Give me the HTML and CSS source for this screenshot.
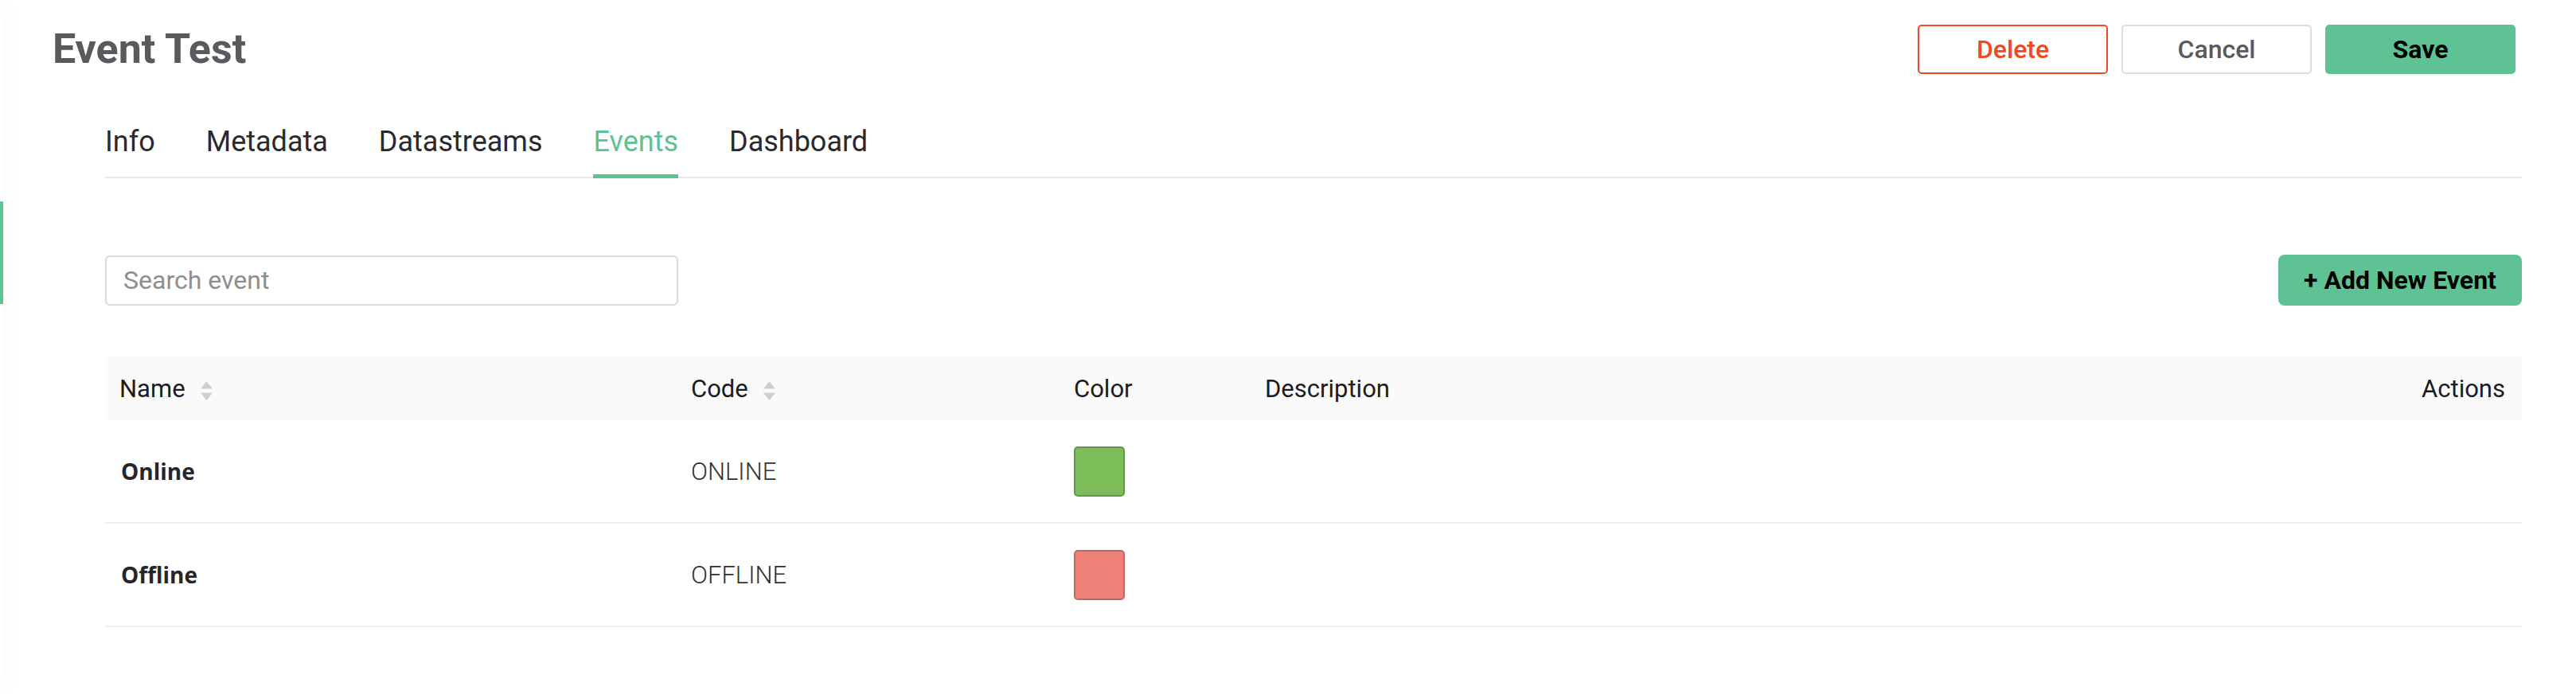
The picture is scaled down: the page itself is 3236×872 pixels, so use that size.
FILE: index.html
```html
<!DOCTYPE html>
<html lang="en">
<head>
<meta charset="utf-8">
<title>Event Test</title>
<link rel="stylesheet" href="styles.css">
</head>
<body>
<div class="app">
  <aside class="rail"><span class="rail-active"></span></aside>
  <main class="main">
    <header class="page-head">
      <h1 class="page-title">Event Test</h1>
      <div class="head-actions">
        <button class="btn btn-danger" type="button">Delete</button>
        <button class="btn btn-default" type="button">Cancel</button>
        <button class="btn btn-primary" type="button">Save</button>
      </div>
    </header>
    <section class="content">
      <nav class="tabs">
        <a class="tab">Info</a>
        <a class="tab">Metadata</a>
        <a class="tab">Datastreams</a>
        <a class="tab tab-active">Events</a>
        <a class="tab">Dashboard</a>
      </nav>
      <div class="toolbar">
        <input class="search" type="text" placeholder="Search event">
        <button class="btn-add" type="button">+ Add New Event</button>
      </div>
      <table class="events">
        <colgroup>
          <col class="col-name">
          <col class="col-code">
          <col class="col-color">
          <col>
          <col class="col-actions">
        </colgroup>
        <thead>
          <tr>
            <th><span class="th-sort">Name<svg class="sort" width="17" height="26" viewBox="0 0 17 26"><path d="M8.5 1 L16 10.5 H1 Z M1 15.5 H16 L8.5 25 Z" fill="#cfcfcf"/></svg></span></th>
            <th><span class="th-sort">Code<svg class="sort" width="17" height="26" viewBox="0 0 17 26"><path d="M8.5 1 L16 10.5 H1 Z M1 15.5 H16 L8.5 25 Z" fill="#cfcfcf"/></svg></span></th>
            <th>Color</th>
            <th>Description</th>
            <th class="th-actions">Actions</th>
          </tr>
        </thead>
        <tbody>
          <tr>
            <td class="cell-name">Online</td>
            <td class="cell-code">ONLINE</td>
            <td><span class="swatch swatch-green"></span></td>
            <td></td>
            <td></td>
          </tr>
          <tr>
            <td class="cell-name">Offline</td>
            <td class="cell-code">OFFLINE</td>
            <td><span class="swatch swatch-red"></span></td>
            <td></td>
            <td></td>
          </tr>
        </tbody>
      </table>
    </section>
  </main>
</div>
</body>
</html>
```
FILE: styles.css
```css
* { box-sizing: border-box; }

html, body {
  margin: 0;
  background: #fff;
}

body {
  font-family: Roboto, "Noto Sans", "Liberation Sans", sans-serif;
  color: #2a2a2e;
}

.app {
  display: flex;
  min-height: 100vh;
}

.rail {
  flex: 0 0 4px;
  background: #fff;
  box-shadow: 0 0 32px rgba(0, 0, 0, 0.09);
  position: relative;
  z-index: 1;
  padding-top: 253px;
}

.rail-active {
  display: block;
  width: 4px;
  height: 129px;
  background: #5ec294;
}

.main {
  flex: 1;
  min-width: 0;
}

/* header */
.page-head {
  display: flex;
  align-items: center;
  justify-content: space-between;
  height: 93px;
  padding: 31px 76px 0 62px;
}

.page-title {
  margin: 0;
  font-size: 52px;
  line-height: 62px;
  font-weight: 700;
  color: #5a5a5e;
}

.head-actions {
  display: flex;
  gap: 17px;
}

.btn {
  width: 239px;
  height: 62px;
  border: 2px solid;
  border-radius: 5px;
  background: #fff;
  font-family: Roboto, sans-serif;
  font-size: 32px;
  font-weight: 500;
  cursor: pointer;
}

.btn-danger {
  border-color: #ef4a22;
  color: #ef4a22;
}

.btn-default {
  border-color: #dcdcdc;
  color: #5a5a5e;
}

.btn-primary {
  border-color: #5ec294;
  background: #5ec294;
  color: #000;
  font-weight: 700;
}

/* content */
.content {
  padding: 0 68px 0 128px;
}

.tabs {
  display: flex;
  gap: 64px;
  margin-top: 64px;
  border-bottom: 2px solid #e8e8e8;
}

.tab {
  position: relative;
  font-size: 36px;
  line-height: 42px;
  padding-bottom: 23px;
  color: #2a2a2e;
  cursor: pointer;
}

.tab-active {
  color: #5ec294;
}

.tab-active::after {
  content: "";
  position: absolute;
  left: 0;
  right: 0;
  bottom: -2px;
  height: 5px;
  background: #5ec294;
}

.toolbar {
  display: flex;
  align-items: center;
  justify-content: space-between;
  margin-top: 96px;
}

.search {
  width: 720px;
  height: 63px;
  border: 2px solid #dadada;
  border-radius: 6px;
  padding: 0 21px;
  font-family: Roboto, sans-serif;
  font-size: 32px;
  color: #333;
  outline: none;
}

.search::placeholder {
  color: #8e8e8e;
}

.btn-add {
  height: 64px;
  width: 306px;
  border: 0;
  border-radius: 8px;
  background: #5ec294;
  color: #000;
  font-family: Roboto, sans-serif;
  font-size: 32px;
  font-weight: 700;
  cursor: pointer;
}

/* table */
.events {
  width: 100%;
  margin-top: 64px;
  border-collapse: separate;
  border-spacing: 0;
  table-layout: fixed;
}

.col-name { width: 718px; }
.col-code { width: 481px; }
.col-color { width: 240px; }
.col-actions { width: 240px; }

.events th {
  height: 80px;
  padding: 0 18px;
  background: #fafafa;
  text-align: left;
  font-size: 31px;
  font-weight: 400;
  color: #1c1c1e;
}

.events th.th-actions {
  text-align: right;
  padding-right: 21px;
}

.th-sort {
  display: inline-flex;
  align-items: center;
  gap: 18px;
}

.sort {
  margin-top: 5px;
}

.events td {
  height: 130px;
  padding: 0 18px;
  border-bottom: 2px solid #ededed;
}

.events td.cell-name {
  padding-left: 20px;
  font-family: "Open Sans", Roboto, sans-serif;
  font-size: 28px;
  font-weight: 700;
  color: #26262a;
}

.events td.cell-code {
  font-size: 31px;
  font-weight: 300;
  color: #333;
}

.swatch {
  display: block;
  width: 64px;
  height: 63px;
  border-radius: 5px;
  border: 2px solid rgba(0, 0, 0, 0.2);
}

.swatch-green { background: #7cbd5a; }
.swatch-red { background: #ef8179; }
```
